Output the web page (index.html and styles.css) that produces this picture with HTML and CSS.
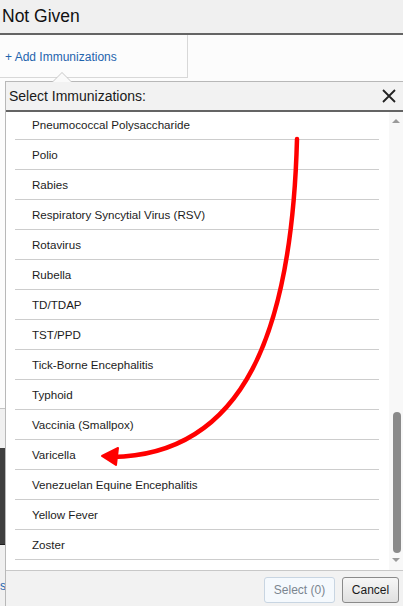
FILE: index.html
```html
<!DOCTYPE html>
<html>
<head>
<meta charset="utf-8">
<link rel="stylesheet" href="styles.css">
</head>
<body>
<div class="page">
  <div class="title">Not Given</div>
  <div class="toolbar">
    <div class="add-cell"><a class="add-link">+ Add Immunizations</a></div>
    <div class="toolbar-rest"></div>
  </div>
  <div class="band band-light"></div>
  <div class="band band-grey"></div>
  <div class="band band-dark"></div>
  <div class="band band-foot"><span class="peek">s</span></div>
</div>

<div class="popup">
  <div class="popup-head">
    <span class="popup-title">Select Immunizations:</span>
    <svg class="close" width="14" height="14" viewBox="0 0 14 14"><path d="M1 1 L13 13 M13 1 L1 13" stroke="#222" stroke-width="1.8" fill="none"/></svg>
  </div>
  <div class="popup-body">
    <div class="list">
      <div class="list-inner">
        <div class="item">Pneumococcal Polysaccharide</div>
        <div class="item">Polio</div>
        <div class="item">Rabies</div>
        <div class="item">Respiratory Syncytial Virus (RSV)</div>
        <div class="item">Rotavirus</div>
        <div class="item">Rubella</div>
        <div class="item">TD/TDAP</div>
        <div class="item">TST/PPD</div>
        <div class="item">Tick-Borne Encephalitis</div>
        <div class="item">Typhoid</div>
        <div class="item">Vaccinia (Smallpox)</div>
        <div class="item">Varicella</div>
        <div class="item">Venezuelan Equine Encephalitis</div>
        <div class="item">Yellow Fever</div>
        <div class="item">Zoster</div>
      </div>
    </div>
    <div class="scrollbar">
      <div class="sb-up"><span class="tri-up"></span></div>
      <div class="sb-track"><div class="sb-thumb"></div></div>
      <div class="sb-down"><span class="tri-down"></span></div>
    </div>
  </div>
  <div class="popup-foot">
    <button class="btn btn-disabled">Select (0)</button>
    <button class="btn btn-cancel">Cancel</button>
  </div>
</div>

<svg class="annot" width="403" height="606" viewBox="0 0 403 606">
  <path d="M297 139 C292 330 245 455 112 457" stroke="#ff0000" stroke-width="4.5" fill="none" stroke-linecap="round"/>
  <polygon points="102,456 118,448 116,465" fill="#ff0000" stroke="#ff0000" stroke-width="2" stroke-linejoin="round"/>
</svg>
</body>
</html>
```
FILE: styles.css
```css
* { box-sizing: border-box; }
html, body { margin: 0; padding: 0; }
body {
  width: 403px;
  height: 606px;
  overflow: hidden;
  background: #fcfcfc;
  font-family: "Liberation Sans", Arial, sans-serif;
  position: relative;
}
.page { display: flex; flex-direction: column; height: 606px; }
.title {
  height: 35px;
  background: #f0f0f0;
  border-bottom: 2px solid #646464;
  font-size: 17.5px;
  color: #111;
  padding-left: 2px;
  line-height: 33px;
}
.toolbar { display: flex; height: 43px; }
.add-cell {
  width: 188px;
  border-right: 1px solid #d8d8d8;
  border-bottom: 1px solid #d8d8d8;
  display: flex;
  align-items: center;
  padding: 2px 0 0 5px;
}
.add-link { color: #1f64ad; font-size: 12px; }
.toolbar-rest { flex: 1; }
.band-light { height: 331px; border-bottom: 1px solid #c4c4c4; background: #fcfcfc; }
.band-grey { height: 39px; background: #f0f0f0; }
.band-dark { height: 97px; background: #3f3f3f; border-bottom: 1px solid #1e1e1e; }
.band-foot { flex: 1; background: #f0f0f0; padding-top: 31px; }
.peek { color: #1f64ad; font-size: 12px; }

.popup {
  position: absolute;
  left: 5px;
  top: 81px;
  width: 399px;
  height: 540px;
  border: 1px solid #b8b8b8;
  background: #fff;
  display: flex;
  flex-direction: column;
}
.popup::before {
  content: "";
  position: absolute;
  left: 46px;
  top: -10px;
  border-left: 10px solid transparent;
  border-right: 10px solid transparent;
  border-bottom: 10px solid #c8c8c8;
}
.popup::after {
  content: "";
  position: absolute;
  left: 47px;
  top: -9px;
  border-left: 9px solid transparent;
  border-right: 9px solid transparent;
  border-bottom: 9px solid #fafafa;
}
.popup-head {
  height: 30px;
  background: #f2f2f2;
  border-bottom: 2px solid #646464;
  display: flex;
  align-items: center;
  justify-content: space-between;
  padding: 0 7px 0 3px;
}
.popup-title { font-size: 14px; color: #1a1a1a; }
.close { display: block; }
.popup-body { height: 458px; display: flex; }
.list { flex: 1; overflow: hidden; }
.list-inner { margin-top: -2px; }
.item {
  height: 30px;
  margin: 0 10px 0 9px;
  border-bottom: 1px solid #cdcdcd;
  padding-left: 17px;
  display: flex;
  align-items: center;
  font-size: 11.6px;
  color: #1c1c1c;
}
.scrollbar {
  width: 14px;
  background: #f8f8f8;
  display: flex;
  flex-direction: column;
}
.sb-up { height: 18px; display: flex; justify-content: center; padding-top: 7px; }
.tri-up { width: 0; height: 0; border-left: 4px solid transparent; border-right: 4px solid transparent; border-bottom: 4px solid #9a9a9a; }
.sb-track { flex: 1; display: flex; flex-direction: column; justify-content: flex-end; align-items: center; padding-bottom: 3px; }
.sb-thumb { width: 8px; height: 141px; background: #8a8a8a; border-radius: 4px; margin-left: 2px; }
.sb-down { height: 14px; display: flex; justify-content: center; padding-top: 2px; }
.tri-down { width: 0; height: 0; border-left: 4px solid transparent; border-right: 4px solid transparent; border-top: 4px solid #9a9a9a; }
.popup-foot {
  flex: 1;
  background: #f2f2f2;
  border-top: 1px solid #c8c8c8;
  display: flex;
  justify-content: flex-end;
  align-items: flex-start;
  gap: 7px;
  padding: 6px 4px 0 0;
}
.btn {
  height: 26px;
  font-family: "Liberation Sans", Arial, sans-serif;
  font-size: 12px;
  border-radius: 3px;
  padding: 0;
}
.btn-disabled { width: 71px; border: 1px solid #c8d5e2; background: #f5f9fd; color: #7b8590; }
.btn-cancel { width: 57px; border: 1px solid #8a8a8a; background: linear-gradient(#f6f6f6, #e0e0e0); color: #1a1a1a; }
.annot { position: absolute; left: 0; top: 0; pointer-events: none; }
```
